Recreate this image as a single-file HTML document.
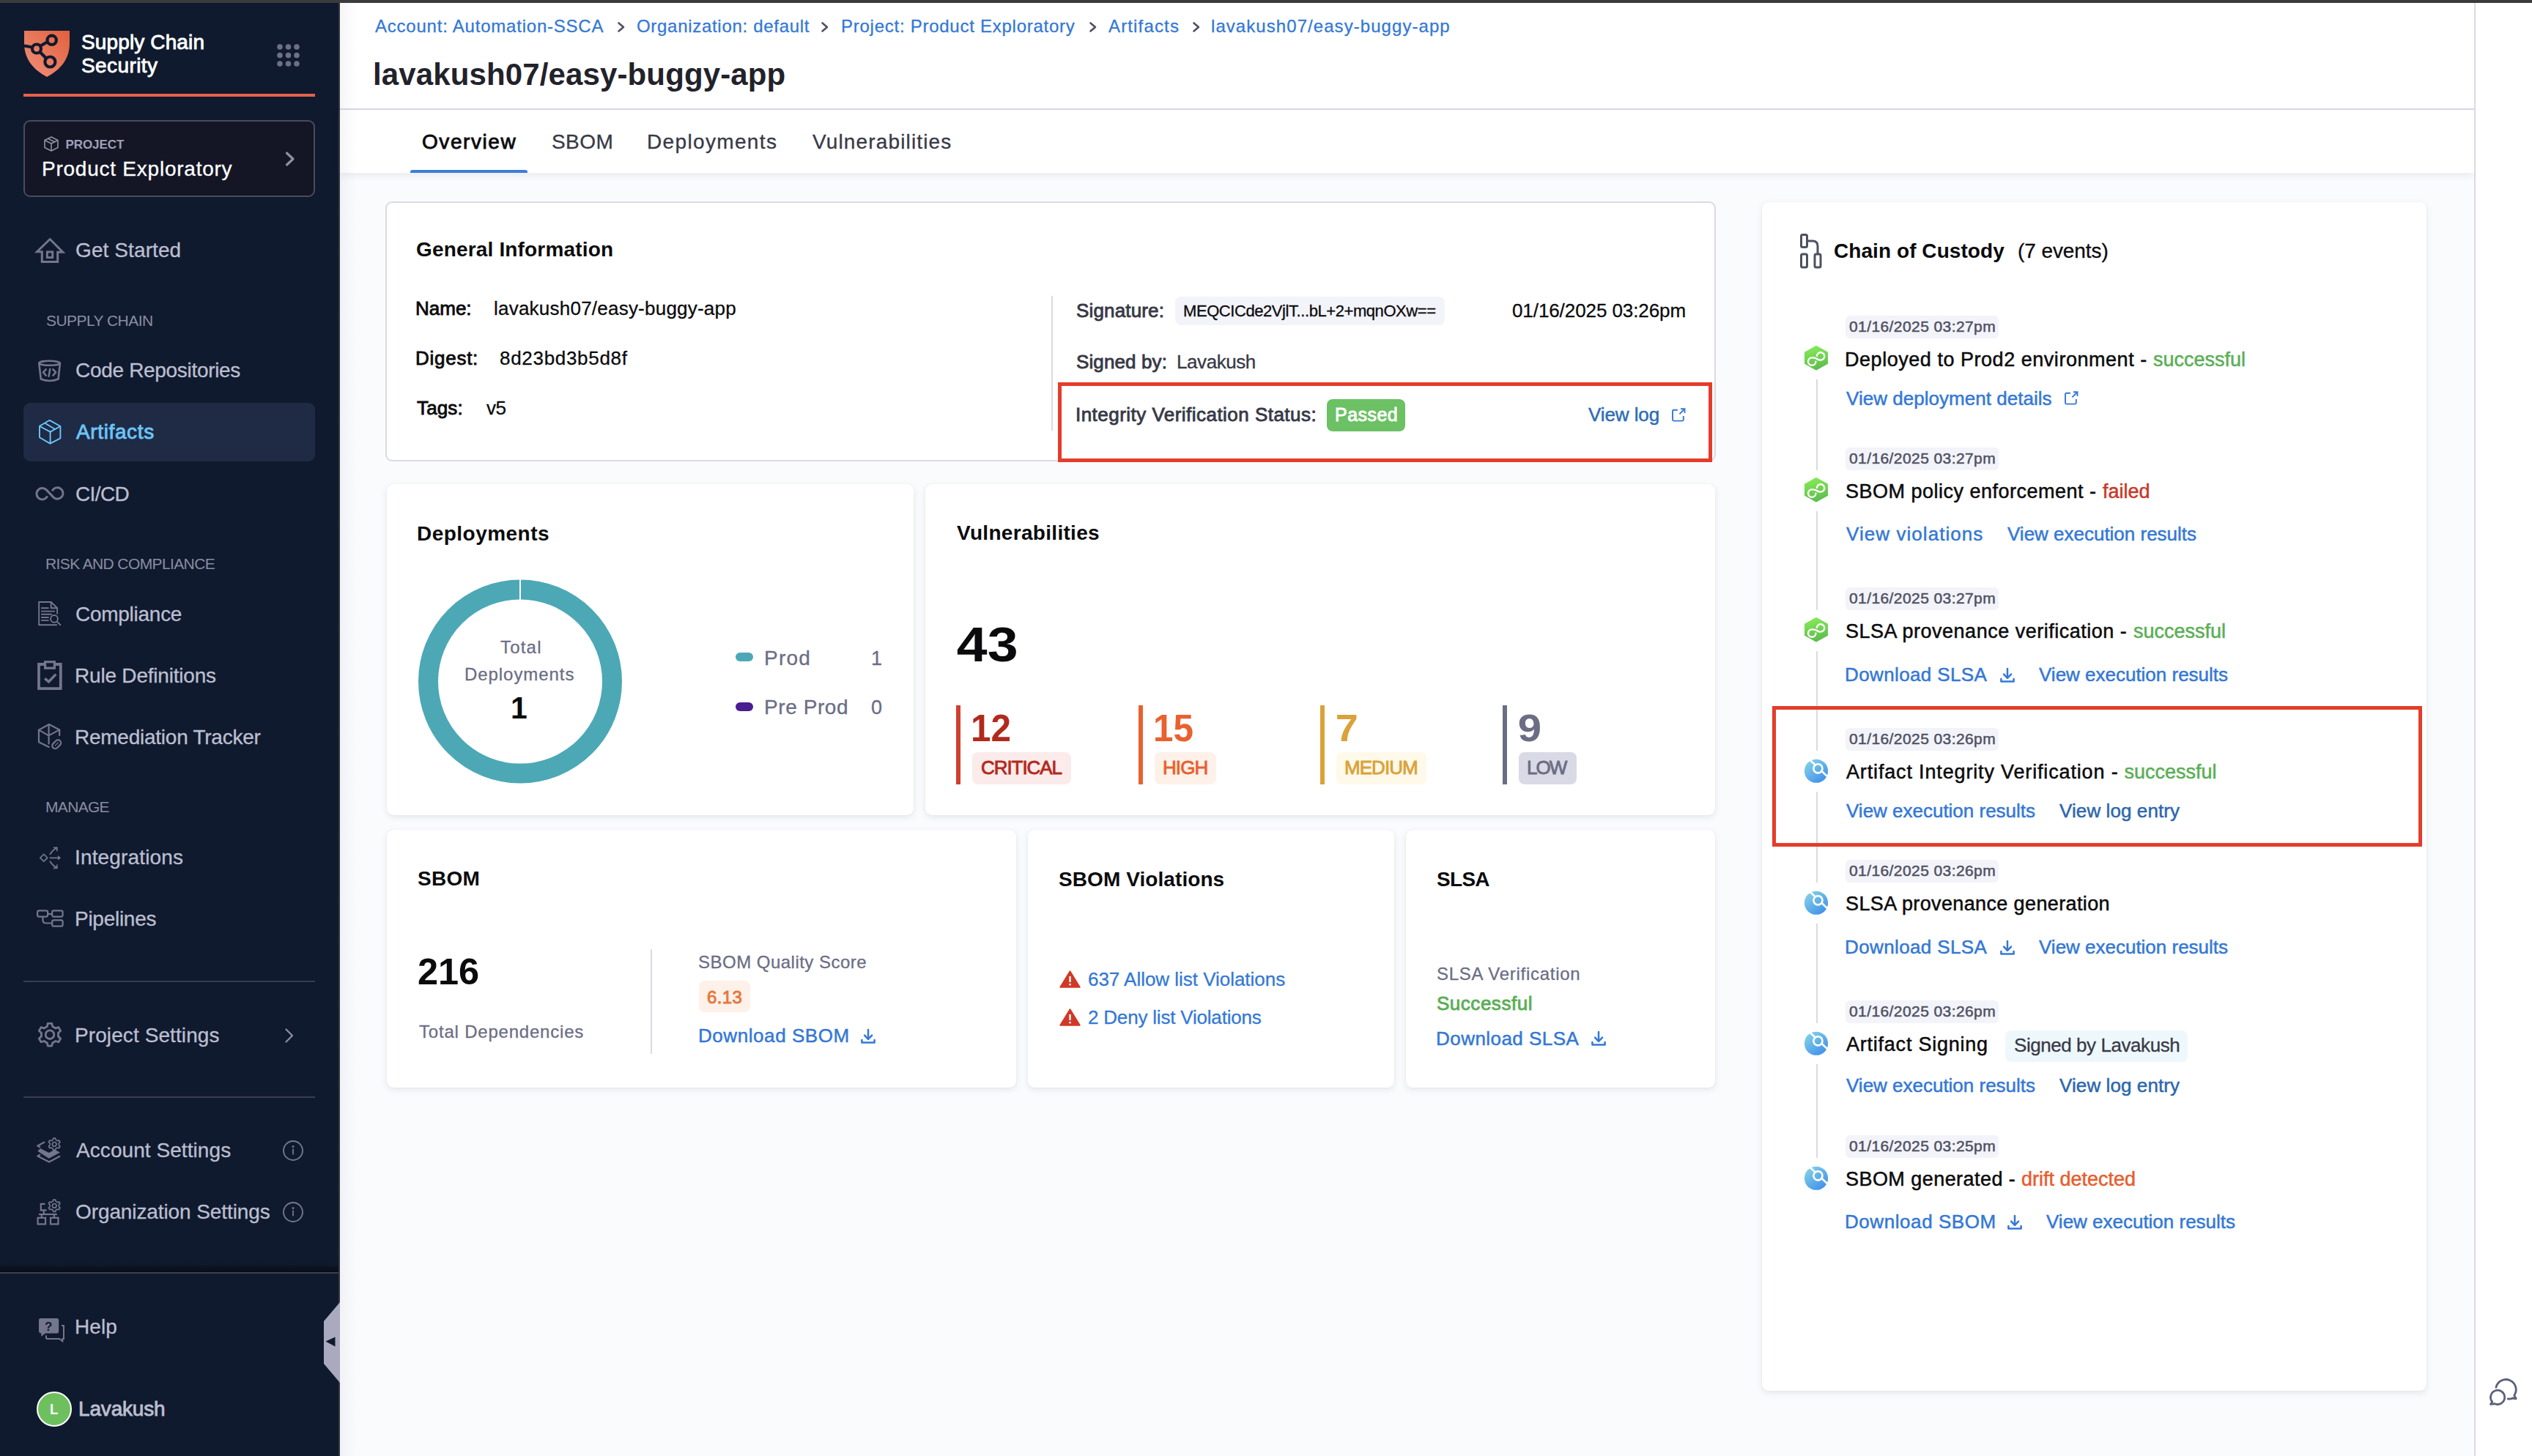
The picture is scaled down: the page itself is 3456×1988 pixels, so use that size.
<!DOCTYPE html><html><head><meta charset='utf-8'><style>
*{margin:0;padding:0;box-sizing:border-box}
html,body{width:3456px;height:1988px;overflow:hidden;background:#F9FBFD;font-family:"Liberation Sans",sans-serif}
.t{position:absolute;white-space:pre;line-height:1}
.a{position:absolute}
svg{position:absolute;overflow:visible}
</style></head><body>
<div class='a' style='left:0;top:0;width:3456px;height:1988px;background:#F9FBFD'></div>
<div class='a' style='left:0;top:0;width:462px;height:1988px;background:#0F1A2E'></div>
<div class='a' style='left:462px;top:0;width:2px;height:1988px;background:#34353F'></div>
<div class='a' style='left:464px;top:0;width:2913px;height:148px;background:#fff'></div>
<div class='a' style='left:464px;top:148px;width:2913px;height:2px;background:#D9DAE5'></div>
<div class='a' style='left:464px;top:150px;width:2913px;height:86px;background:#fff;box-shadow:0 4px 10px rgba(96,97,112,.10)'></div>
<div class='a' style='left:3377px;top:0;width:2px;height:1988px;background:#D9DAE5'></div>
<div class='a' style='left:3379px;top:0;width:77px;height:1988px;background:#fff'></div>
<div class='a' style='left:464px;top:0;width:22px;height:1988px;background:linear-gradient(to right,rgba(40,41,61,.045),rgba(40,41,61,0))'></div>
<div class='a' style='left:0;top:0;width:3456px;height:4px;background:#3B3B3D'></div>
<svg style='left:33px;top:42px' width='62' height='63' viewBox='0 0 62 63'>
<defs><linearGradient id='lg' x1='1' y1='0' x2='0' y2='1'><stop offset='0' stop-color='#E1603E'/><stop offset='1' stop-color='#F0917A'/></linearGradient></defs>
<path d='M0 0 H62 V17 C62 38 50 53 31 63 C12 53 0 38 0 17 Z' fill='url(#lg)'/>
<g fill='none' stroke='#0F1A2E' stroke-width='4.2'>
<path d='M0 20.5 L11 22.5'/><path d='M22.5 20.5 L32 15'/><path d='M21.5 29 L30 37.5'/>
<circle cx='17' cy='24.5' r='6'/><circle cx='37.7' cy='12.8' r='6.2'/><circle cx='35.4' cy='42.5' r='7'/>
</g></svg>
<div class='t' style='left:111.00px;top:44px;font-size:28px;font-weight:400;-webkit-text-stroke:0.85px #FFFFFF;color:#FFFFFF;letter-spacing:0.127px;'>Supply Chain</div>
<div class='t' style='left:111.00px;top:76px;font-size:28px;font-weight:400;-webkit-text-stroke:0.85px #FFFFFF;color:#FFFFFF;letter-spacing:0.400px;'>Security</div>
<svg style='left:378px;top:60px' width='31' height='31'><circle cx='4.0' cy='4.0' r='3.8' fill='#6E7087'/><circle cx='15.5' cy='4.0' r='3.8' fill='#6E7087'/><circle cx='27.0' cy='4.0' r='3.8' fill='#6E7087'/><circle cx='4.0' cy='15.5' r='3.8' fill='#6E7087'/><circle cx='15.5' cy='15.5' r='3.8' fill='#6E7087'/><circle cx='27.0' cy='15.5' r='3.8' fill='#6E7087'/><circle cx='4.0' cy='27.0' r='3.8' fill='#6E7087'/><circle cx='15.5' cy='27.0' r='3.8' fill='#6E7087'/><circle cx='27.0' cy='27.0' r='3.8' fill='#6E7087'/></svg>
<div class='a' style='left:32px;top:128px;width:398px;height:4px;background:#E8604A'></div>
<div class='a' style='left:32px;top:164px;width:398px;height:105px;background:#141625;border:2px solid #4A4C5F;border-radius:9px'></div>
<svg style='left:60px;top:186px' width='20' height='21' viewBox='0 0 20 21'><g fill='none' stroke='#8E90A5' stroke-width='1.6' stroke-linejoin='round'>
<path d='M10 1 L19 5.5 V15.5 L10 20 L1 15.5 V5.5 Z'/><path d='M1 5.5 L10 10 L19 5.5'/><path d='M10 10 V20'/><path d='M5.5 3.2 L14.5 7.7'/></g></svg>
<div class='t' style='left:89.50px;top:189px;font-size:17px;font-weight:700;color:#9FA1B8;letter-spacing:-0.083px;'>PROJECT</div>
<div class='t' style='left:57.00px;top:217px;font-size:28px;font-weight:400;-webkit-text-stroke:0.3px #FFFFFF;color:#FFFFFF;letter-spacing:0.761px;'>Product Exploratory</div>
<svg style='left:389px;top:207px' width='14' height='20' viewBox='0 0 14 20'><path d='M2.5 2 L11 10 L2.5 18' fill='none' stroke='#8E90A5' stroke-width='3.2' stroke-linecap='round' stroke-linejoin='round'/></svg>
<div class='a' style='left:32px;top:550px;width:398px;height:80px;background:#1F2A44;border-radius:9px'></div>
<div class='t' style='left:103.00px;top:328px;font-size:28px;font-weight:400;-webkit-text-stroke:0.3px #BCBED0;color:#BCBED0;letter-spacing:0.100px;'>Get Started</div>
<div class='t' style='left:103.00px;top:492px;font-size:28px;font-weight:400;-webkit-text-stroke:0.3px #BCBED0;color:#BCBED0;letter-spacing:-0.312px;'>Code Repositories</div>
<div class='t' style='left:103.00px;top:661px;font-size:28px;font-weight:400;-webkit-text-stroke:0.3px #BCBED0;color:#BCBED0;letter-spacing:-0.600px;'>CI/CD</div>
<div class='t' style='left:103.00px;top:825px;font-size:28px;font-weight:400;-webkit-text-stroke:0.3px #BCBED0;color:#BCBED0;letter-spacing:-0.267px;'>Compliance</div>
<div class='t' style='left:102.00px;top:909px;font-size:28px;font-weight:400;-webkit-text-stroke:0.3px #BCBED0;color:#BCBED0;letter-spacing:-0.200px;'>Rule Definitions</div>
<div class='t' style='left:102.00px;top:993px;font-size:28px;font-weight:400;-webkit-text-stroke:0.3px #BCBED0;color:#BCBED0;letter-spacing:-0.250px;'>Remediation Tracker</div>
<div class='t' style='left:102.00px;top:1157px;font-size:28px;font-weight:400;-webkit-text-stroke:0.3px #BCBED0;color:#BCBED0;letter-spacing:0.155px;'>Integrations</div>
<div class='t' style='left:102.00px;top:1241px;font-size:28px;font-weight:400;-webkit-text-stroke:0.3px #BCBED0;color:#BCBED0;letter-spacing:-0.275px;'>Pipelines</div>
<div class='t' style='left:102.00px;top:1400px;font-size:28px;font-weight:400;-webkit-text-stroke:0.3px #BCBED0;color:#BCBED0;letter-spacing:0.093px;'>Project Settings</div>
<div class='t' style='left:104.00px;top:1557px;font-size:28px;font-weight:400;-webkit-text-stroke:0.3px #BCBED0;color:#BCBED0;letter-spacing:0.067px;'>Account Settings</div>
<div class='t' style='left:103.00px;top:1641px;font-size:28px;font-weight:400;-webkit-text-stroke:0.3px #BCBED0;color:#BCBED0;letter-spacing:-0.100px;'>Organization Settings</div>
<div class='t' style='left:102.00px;top:1798px;font-size:28px;font-weight:400;-webkit-text-stroke:0.3px #BCBED0;color:#BCBED0;letter-spacing:0.100px;'>Help</div>
<div class='t' style='left:104.00px;top:576px;font-size:28px;font-weight:400;-webkit-text-stroke:0.85px #6CC5F7;color:#6CC5F7;letter-spacing:0.625px;'>Artifacts</div>
<svg style='left:40px;top:315px' width='60' height='60' viewBox='0 0 60 60'><g fill='none' stroke='#74768D' stroke-width='3' stroke-linejoin='miter'>
<path d='M10.5 28.8 L28.2 11.5 L45.8 29.3 H38.7 V42.4 H17.3 V28.8 Z'/><rect x='24.35' y='28.9' width='7.4' height='7.7' stroke-width='2.9'/></g></svg>
<svg style='left:40px;top:480px' width='60' height='60' viewBox='0 0 60 60'><g fill='none' stroke='#74768D' stroke-width='2.6' stroke-linecap='round' stroke-linejoin='round'>
<ellipse cx='27.6' cy='15.8' rx='14.3' ry='3'/><path d='M13.3 16 L15.8 37.5 Q27.6 42.5 39.6 37.5 L41.9 16'/>
<path d='M22.6 24.3 L19 28.4 L22.6 32.5'/><path d='M28.3 24 L26.6 33.6'/><path d='M32.5 24.3 L36.1 28.4 L32.5 32.5'/></g></svg>
<svg style='left:40px;top:560px' width='60' height='60' viewBox='0 0 60 60'><g fill='none' stroke='#6CC5F7' stroke-width='1.9' stroke-linejoin='round'>
<path d='M27.8 13.8 L42.4 22 V38.3 L28.4 45.6 L14 37.3 V21.8 Z'/><path d='M14.2 22 L28.6 29.7 L42.4 22'/><path d='M28.6 29.7 V45.5'/><path d='M21.4 17.8 L35.4 26.2'/></g></svg>
<svg style='left:40px;top:644px' width='60' height='60' viewBox='0 0 60 60'><path d='M24.7 33.4 A7.7 7.7 0 1 1 23.3 24.9 L33.6 35.6 A7.7 7.7 0 1 0 31.3 26.3' fill='none' stroke='#74768D' stroke-width='3' stroke-linecap='butt'/></svg>
<svg style='left:40px;top:808px' width='60' height='60' viewBox='0 0 60 60'><g fill='none' stroke='#74768D' stroke-width='1.9'>
<path d='M37.9 45.3 H13.2 V14 H29.7 L38.1 22.2 V30.5'/><path d='M29.7 14 V22.2 H38.1'/>
<path d='M16.1 22.3 H26.6 M16.1 26.6 H35 M16.1 30.7 H30.7 M16.1 35 H26.6 M16.1 39.1 H26.6'/>
<circle cx='34' cy='36.9' r='4.9'/><path d='M37.6 40.6 L42.9 45.8'/></g></svg>
<svg style='left:40px;top:892px' width='60' height='60' viewBox='0 0 60 60'><g fill='none' stroke='#74768D' stroke-width='3.8' stroke-linejoin='miter'>
<path d='M20 15 H13 V48.2 H42.8 V15 H36'/><rect x='21.6' y='11.7' width='12.8' height='8.5' stroke-width='3.2'/>
<path d='M21.2 34.3 L26.5 38.8 L36.3 28.6' stroke-width='3.5'/></g></svg>
<svg style='left:40px;top:976px' width='60' height='60' viewBox='0 0 60 60'><g fill='none' stroke='#74768D' stroke-width='2.2' stroke-linejoin='round' stroke-linecap='round'>
<path d='M41.2 28 V20.4 L27 13 L13 20.6 V37.3 L26.8 43.9'/><path d='M13 20.6 L26.4 28.4 L41.2 20.4'/><path d='M26.6 13.5 V26.5 M26.6 30 V39.5'/>
<rect x='30.5' y='36.3' width='13.5' height='8' rx='4' transform='rotate(-45 37.2 40.3)'/></g>
<g fill='#74768D'><circle cx='35.6' cy='41.6' r='0.9'/><circle cx='37.2' cy='40' r='0.9'/><circle cx='38.8' cy='38.4' r='0.9'/></g></svg>
<svg style='left:40px;top:1141px' width='60' height='60' viewBox='0 0 60 60'><g fill='none' stroke='#74768D' stroke-width='1.7' stroke-linecap='round' stroke-linejoin='round'>
<rect x='16.3' y='26.8' width='7' height='7' transform='rotate(45 19.8 30.3)'/>
<path d='M28.4 30.3 H41'/><path d='M28.4 25.3 Q31.5 20 37.5 16.5'/><path d='M28.4 35.2 Q31.5 40.5 37.5 44'/>
<path d='M33.5 16.3 H37.8 V20.5'/><path d='M33.5 44.3 H37.8 V40'/></g>
<path d='M39 27 L43.2 30.3 L39 33.6 Z' fill='#74768D'/></svg>
<svg style='left:40px;top:1224px' width='60' height='60' viewBox='0 0 60 60'><g fill='none' stroke='#74768D' stroke-width='2.2'>
<rect x='11.1' y='19.3' width='14' height='8.3' rx='2'/><rect x='31.2' y='19.3' width='14.4' height='8.3' rx='2'/><rect x='31.2' y='32.4' width='14.4' height='8.3' rx='2'/>
<path d='M25.1 23.9 H31.2'/><path d='M18.4 27.6 V32 Q18.4 36.5 22.9 36.5 H31.2'/></g></svg>
<svg style='left:40px;top:1382px' width='60' height='60' viewBox='0 0 60 60'><g fill='none' stroke='#74768D' stroke-width='2.8' stroke-linejoin='round'>
<path d='M24.35 19.48 L25.24 15.35 L30.76 15.35 L31.65 19.48 L35.90 21.93 L39.92 20.63 L42.68 25.42 L39.54 28.25 L39.54 33.15 L42.68 35.98 L39.92 40.77 L35.90 39.47 L31.65 41.92 L30.76 46.05 L25.24 46.05 L24.35 41.92 L20.10 39.47 L16.08 40.77 L13.32 35.98 L16.46 33.15 L16.46 28.25 L13.32 25.42 L16.08 20.63 L20.10 21.93 Z'/><circle cx='28' cy='30.7' r='5.8'/></g></svg>
<svg style='left:40px;top:1540px' width='60' height='60' viewBox='0 0 60 60'><g fill='none' stroke='#74768D' stroke-width='2.2' stroke-linejoin='round'>
<path d='M32.25 16.31 L32.73 14.13 L35.67 14.13 L36.15 16.31 L38.42 17.62 L40.54 16.94 L42.01 19.49 L40.36 20.99 L40.36 23.61 L42.01 25.11 L40.54 27.66 L38.42 26.98 L36.15 28.29 L35.67 30.47 L32.73 30.47 L32.25 28.29 L29.98 26.98 L27.86 27.66 L26.39 25.11 L28.04 23.61 L28.04 20.99 L26.39 19.49 L27.86 16.94 L29.98 17.62 Z' stroke-width='1.7'/><circle cx='34.2' cy='22.3' r='2.8' stroke-width='1.7'/>
<path d='M21 19.3 L11.3 24.5 L15 26.5'/><path d='M42 38.5 L27 46.5 L11.3 38.5 L15 36.5'/></g>
<path d='M11.3 31.8 L26.8 41.8 L42 33.5 L34.5 29.8 L26.8 34 L15 28 Z' fill='#74768D'/></svg>
<svg style='left:40px;top:1624px' width='60' height='60' viewBox='0 0 60 60'><g fill='none' stroke='#74768D' stroke-width='2.2'>
<path d='M32.25 16.31 L32.73 14.13 L35.67 14.13 L36.15 16.31 L38.42 17.62 L40.54 16.94 L42.01 19.49 L40.36 20.99 L40.36 23.61 L42.01 25.11 L40.54 27.66 L38.42 26.98 L36.15 28.29 L35.67 30.47 L32.73 30.47 L32.25 28.29 L29.98 26.98 L27.86 27.66 L26.39 25.11 L28.04 23.61 L28.04 20.99 L26.39 19.49 L27.86 16.94 L29.98 17.62 Z' stroke-width='1.7' stroke-linejoin='round'/><circle cx='34.2' cy='22.3' r='2.8' stroke-width='1.7'/>
<path d='M21.5 19.8 H15.8 V28.4 H23.5'/><path d='M19.8 28.4 V34.2'/><path d='M13 34 H37.8'/><path d='M16.8 34 V38.8 M34 34 V38.8'/>
<rect x='11.6' y='38.8' width='10.5' height='8.6'/><rect x='29' y='38.8' width='10.5' height='8.6'/></g></svg>
<svg style='left:40px;top:1786px' width='60' height='60' viewBox='0 0 60 60'><path d='M15.5 14 H37.8 Q40.2 14 40.2 16.4 V32.3 Q40.2 34.6 37.8 34.6 H22 L16.5 38.7 L16 34.4 Q13 34 13 31.5 V16.5 Q13 14 15.5 14 Z' fill='#74768D'/>
<text x='26.3' y='30.5' font-family='Liberation Sans' font-weight='700' font-size='17' fill='#0F1A2E' text-anchor='middle'>?</text>
<path d='M44 24 H47 V42 H45.3 L45.3 45.3 L41 42 H24.8 Q23 42 23 40.2 V37.3' fill='none' stroke='#74768D' stroke-width='2'/></svg>
<svg style='left:385px;top:1556px' width='30' height='30' viewBox='0 0 30 30'><circle cx='15' cy='15' r='13' fill='none' stroke='#74768D' stroke-width='1.9'/><circle cx='15' cy='9.4' r='1.5' fill='#74768D'/><path d='M15 13.2 V19.7' stroke='#74768D' stroke-width='1.8' stroke-linecap='round'/></svg>
<svg style='left:385px;top:1640px' width='30' height='30' viewBox='0 0 30 30'><circle cx='15' cy='15' r='13' fill='none' stroke='#74768D' stroke-width='1.9'/><circle cx='15' cy='9.4' r='1.5' fill='#74768D'/><path d='M15 13.2 V19.7' stroke='#74768D' stroke-width='1.8' stroke-linecap='round'/></svg>
<svg style='left:388px;top:1404px' width='14' height='20' viewBox='0 0 14 20'><path d='M2.5 1.5 L11 10 L2.5 18.5' fill='none' stroke='#8E90A5' stroke-width='2.2' stroke-linecap='round' stroke-linejoin='round'/></svg>
<div class='t' style='left:63.00px;top:427px;font-size:21px;font-weight:400;color:#8B8DA2;letter-spacing:-0.545px;'>SUPPLY CHAIN</div>
<div class='t' style='left:62.00px;top:759px;font-size:21px;font-weight:400;color:#8B8DA2;letter-spacing:-0.611px;'>RISK AND COMPLIANCE</div>
<div class='t' style='left:62.00px;top:1091px;font-size:21px;font-weight:400;color:#8B8DA2;letter-spacing:-0.680px;'>MANAGE</div>
<div class='a' style='left:32px;top:1339px;width:398px;height:2px;background:#3A3D4E'></div>
<div class='a' style='left:32px;top:1497px;width:398px;height:2px;background:#3A3D4E'></div>
<div class='a' style='left:0;top:1725px;width:462px;height:13px;background:linear-gradient(#0F1A2E,#070B14)'></div>
<div class='a' style='left:0;top:1737px;width:462px;height:2px;background:#3E404E'></div>
<div class='a' style='left:50px;top:1900px;width:48px;height:48px;border-radius:50%;background:#6EC05F;border:2px solid #fff'></div>
<div class='t' style='left:67.60px;top:1914px;font-size:20px;font-weight:700;color:#FFFFFF;transform:scaleX(0.9273);transform-origin:1px 0;'>L</div>
<div class='t' style='left:107.00px;top:1910px;font-size:28px;font-weight:400;-webkit-text-stroke:0.85px #BCBED0;color:#BCBED0;letter-spacing:-0.171px;'>Lavakush</div>
<svg style='left:440px;top:1778px' width='24' height='110' viewBox='0 0 24 110'><path d='M24 0 V110 L2 84 V26 Z' fill='#A9AABF'/><path d='M4.5 53.6 L17.5 47.4 V60.4 Z' fill='#0F1A2E'/></svg>
<div class='t' style='left:512.00px;top:24px;font-size:24px;font-weight:400;-webkit-text-stroke:0.3px #3478D6;color:#3478D6;letter-spacing:0.783px;'>Account: Automation-SSCA</div>
<div class='t' style='left:869.00px;top:24px;font-size:24px;font-weight:400;-webkit-text-stroke:0.3px #3478D6;color:#3478D6;letter-spacing:0.700px;'>Organization: default</div>
<div class='t' style='left:1148.00px;top:24px;font-size:24px;font-weight:400;-webkit-text-stroke:0.3px #3478D6;color:#3478D6;letter-spacing:0.741px;'>Project: Product Exploratory</div>
<div class='t' style='left:1513.00px;top:24px;font-size:24px;font-weight:400;-webkit-text-stroke:0.3px #3478D6;color:#3478D6;letter-spacing:1.150px;'>Artifacts</div>
<div class='t' style='left:1653.00px;top:24px;font-size:24px;font-weight:400;-webkit-text-stroke:0.3px #3478D6;color:#3478D6;letter-spacing:1.062px;'>lavakush07/easy-buggy-app</div>
<svg style='left:841.5px;top:30px' width='12' height='14' viewBox='0 0 12 14'><path d='M2.5 1.5 L9 7 L2.5 12.5' fill='none' stroke='#4F5162' stroke-width='2.6' stroke-linecap='round' stroke-linejoin='round'/></svg>
<svg style='left:1120px;top:30px' width='12' height='14' viewBox='0 0 12 14'><path d='M2.5 1.5 L9 7 L2.5 12.5' fill='none' stroke='#4F5162' stroke-width='2.6' stroke-linecap='round' stroke-linejoin='round'/></svg>
<svg style='left:1486px;top:30px' width='12' height='14' viewBox='0 0 12 14'><path d='M2.5 1.5 L9 7 L2.5 12.5' fill='none' stroke='#4F5162' stroke-width='2.6' stroke-linecap='round' stroke-linejoin='round'/></svg>
<svg style='left:1627px;top:30px' width='12' height='14' viewBox='0 0 12 14'><path d='M2.5 1.5 L9 7 L2.5 12.5' fill='none' stroke='#4F5162' stroke-width='2.6' stroke-linecap='round' stroke-linejoin='round'/></svg>
<div class='t' style='left:509.00px;top:81px;font-size:42px;font-weight:700;color:#22222A;letter-spacing:0.125px;'>lavakush07/easy-buggy-app</div>
<div class='t' style='left:576.00px;top:180px;font-size:28px;font-weight:400;-webkit-text-stroke:0.85px #0B0B0D;color:#0B0B0D;letter-spacing:1.571px;'>Overview</div>
<div class='t' style='left:753.00px;top:180px;font-size:28px;font-weight:400;-webkit-text-stroke:0.3px #383946;color:#383946;letter-spacing:0.433px;'>SBOM</div>
<div class='t' style='left:883.00px;top:180px;font-size:28px;font-weight:400;-webkit-text-stroke:0.3px #383946;color:#383946;letter-spacing:1.350px;'>Deployments</div>
<div class='t' style='left:1109.00px;top:180px;font-size:28px;font-weight:400;-webkit-text-stroke:0.3px #383946;color:#383946;letter-spacing:1.143px;'>Vulnerabilities</div>
<div class='a' style='left:560px;top:232px;width:160px;height:4px;background:#3B7DDB;border-radius:3px 3px 0 0'></div>
<div class='a' style='left:526px;top:275px;width:1816px;height:355px;background:#fff;border-radius:9px;box-shadow:0 0 2px rgba(40,41,61,.06),0 3px 8px rgba(96,97,112,.13);border:2px solid #D9DAE5;box-shadow:none'></div>
<div class='a' style='left:528px;top:661px;width:719px;height:452px;background:#fff;border-radius:9px;box-shadow:0 0 2px rgba(40,41,61,.06),0 3px 8px rgba(96,97,112,.13);'></div>
<div class='a' style='left:1263px;top:661px;width:1078px;height:452px;background:#fff;border-radius:9px;box-shadow:0 0 2px rgba(40,41,61,.06),0 3px 8px rgba(96,97,112,.13);'></div>
<div class='a' style='left:528px;top:1133px;width:859px;height:352px;background:#fff;border-radius:9px;box-shadow:0 0 2px rgba(40,41,61,.06),0 3px 8px rgba(96,97,112,.13);'></div>
<div class='a' style='left:1403px;top:1133px;width:500px;height:352px;background:#fff;border-radius:9px;box-shadow:0 0 2px rgba(40,41,61,.06),0 3px 8px rgba(96,97,112,.13);'></div>
<div class='a' style='left:1919px;top:1133px;width:422px;height:352px;background:#fff;border-radius:9px;box-shadow:0 0 2px rgba(40,41,61,.06),0 3px 8px rgba(96,97,112,.13);'></div>
<div class='a' style='left:2405px;top:276px;width:907px;height:1623px;background:#fff;border-radius:9px;box-shadow:0 0 2px rgba(40,41,61,.06),0 3px 8px rgba(96,97,112,.13);'></div>
<div class='t' style='left:568.00px;top:327px;font-size:28px;font-weight:700;color:#0B0B0D;letter-spacing:0.167px;'>General Information</div>
<div class='t' style='left:567.00px;top:408px;font-size:26px;font-weight:400;-webkit-text-stroke:0.85px #0B0B0D;color:#0B0B0D;letter-spacing:0.000px;'>Name:</div>
<div class='t' style='left:674.00px;top:408px;font-size:26px;font-weight:400;-webkit-text-stroke:0.3px #0B0B0D;color:#0B0B0D;letter-spacing:0.229px;'>lavakush07/easy-buggy-app</div>
<div class='t' style='left:567.00px;top:476px;font-size:26px;font-weight:400;-webkit-text-stroke:0.85px #0B0B0D;color:#0B0B0D;letter-spacing:0.733px;'>Digest:</div>
<div class='t' style='left:682.00px;top:476px;font-size:26px;font-weight:400;-webkit-text-stroke:0.3px #0B0B0D;color:#0B0B0D;letter-spacing:0.700px;'>8d23bd3b5d8f</div>
<div class='t' style='left:569.00px;top:544px;font-size:26px;font-weight:400;-webkit-text-stroke:0.85px #0B0B0D;color:#0B0B0D;letter-spacing:0.125px;'>Tags:</div>
<div class='t' style='left:664.00px;top:544px;font-size:26px;font-weight:400;-webkit-text-stroke:0.3px #0B0B0D;color:#0B0B0D;letter-spacing:-0.400px;'>v5</div>
<div class='a' style='left:1435px;top:404px;width:2px;height:184px;background:#D9DAE5'></div>
<div class='t' style='left:1469.00px;top:411px;font-size:26px;font-weight:400;-webkit-text-stroke:0.85px #383946;color:#383946;letter-spacing:0.156px;'>Signature:</div>
<div class='a' style='left:1604px;top:405px;width:368px;height:39px;background:#F3F3FA;border-radius:8px'></div>
<div class='t' style='left:1615.00px;top:414px;font-size:22px;font-weight:400;-webkit-text-stroke:0.3px #0B0B0D;color:#0B0B0D;letter-spacing:-0.429px;'>MEQCICde2VjlT...bL+2+mqnOXw==</div>
<div class='t' style='left:2064.00px;top:411px;font-size:26px;font-weight:400;-webkit-text-stroke:0.3px #0B0B0D;color:#0B0B0D;letter-spacing:-0.088px;'>01/16/2025 03:26pm</div>
<div class='t' style='left:1469.00px;top:481px;font-size:26px;font-weight:400;-webkit-text-stroke:0.85px #383946;color:#383946;letter-spacing:0.111px;'>Signed by:</div>
<div class='t' style='left:1606.00px;top:481px;font-size:26px;font-weight:400;-webkit-text-stroke:0.3px #383946;color:#383946;letter-spacing:-0.429px;'>Lavakush</div>
<div class='t' style='left:1468.00px;top:553px;font-size:26px;font-weight:400;-webkit-text-stroke:0.85px #383946;color:#383946;letter-spacing:0.469px;'>Integrity Verification Status:</div>
<div class='a' style='left:1811px;top:545px;width:107px;height:44px;background:#6BC163;border-radius:8px'></div>
<div class='t' style='left:1822.00px;top:554px;font-size:25px;font-weight:400;-webkit-text-stroke:0.85px #FFFFFF;color:#FFFFFF;letter-spacing:0.460px;'>Passed</div>
<div class='t' style='left:2168.00px;top:553px;font-size:26px;font-weight:400;-webkit-text-stroke:0.5px #2F6DB5;color:#2F6DB5;letter-spacing:-0.086px;'>View log</div>
<svg style='left:2281.9px;top:557.2px' width='20' height='20' viewBox='0 0 20 20'><g fill='none' stroke='#3478D6' stroke-width='1.9' stroke-linecap='butt'><path d='M7.9 2.8 H2.5 Q1 2.8 1 4.3 V16.1 Q1 17.6 2.5 17.6 H14.3 Q15.8 17.6 15.8 16.1 V11.1'/><path d='M10.4 8.3 L17.2 1.5'/><path d='M12 1.2 H17.5 V6.9'/></g></svg>
<div class='a' style='left:1444px;top:522px;width:893px;height:109px;border:5px solid #E43D2A'></div>
<div class='t' style='left:569.00px;top:715px;font-size:28px;font-weight:700;color:#0B0B0D;letter-spacing:0.470px;'>Deployments</div>
<svg style='left:571px;top:791px' width='278' height='279' viewBox='0 0 278 279'>
<circle cx='139' cy='139.5' r='125.5' fill='none' stroke='#4DA8B6' stroke-width='27'/>
<rect x='138' y='0' width='2' height='28' fill='#fff'/></svg>
<div class='t' style='left:683.00px;top:872px;font-size:24px;font-weight:400;-webkit-text-stroke:0.3px #6B6D85;color:#6B6D85;letter-spacing:1.200px;'>Total</div>
<div class='t' style='left:634.00px;top:909px;font-size:24px;font-weight:400;-webkit-text-stroke:0.3px #6B6D85;color:#6B6D85;letter-spacing:0.940px;'>Deployments</div>
<div class='t' style='left:697.20px;top:946px;font-size:42px;font-weight:700;color:#0B0B0D;transform:scaleX(0.9737);transform-origin:3px 0;'>1</div>
<div class='a' style='left:1004px;top:891px;width:24px;height:12px;background:#4DA8B6;border-radius:6px'></div>
<div class='a' style='left:1004px;top:959px;width:24px;height:12px;background:#4A1D91;border-radius:6px'></div>
<div class='t' style='left:1043.00px;top:885px;font-size:28px;font-weight:400;-webkit-text-stroke:0.3px #6B6D85;color:#6B6D85;letter-spacing:1.200px;'>Prod</div>
<div class='t' style='left:1043.00px;top:952px;font-size:28px;font-weight:400;-webkit-text-stroke:0.3px #6B6D85;color:#6B6D85;letter-spacing:0.571px;'>Pre Prod</div>
<div class='t' style='left:1189.00px;top:886px;font-size:27px;font-weight:400;-webkit-text-stroke:0.3px #6B6D85;color:#6B6D85;'>1</div>
<div class='t' style='left:1189.00px;top:953px;font-size:27px;font-weight:400;-webkit-text-stroke:0.3px #6B6D85;color:#6B6D85;'>0</div>
<div class='t' style='left:1306.00px;top:714px;font-size:28px;font-weight:700;color:#0B0B0D;letter-spacing:0.307px;'>Vulnerabilities</div>
<div class='t' style='left:1306.00px;top:847px;font-size:66px;font-weight:700;color:#0B0B0D;transform:scaleX(1.1400);transform-origin:1px 0;'>43</div>
<div class='a' style='left:1305px;top:963px;width:6px;height:108px;background:#D2402F'></div>
<div class='t' style='left:1325.00px;top:969px;font-size:51px;font-weight:700;color:#B22A1C;transform:scaleX(0.9692);transform-origin:3px 0;'>12</div>
<div class='a' style='left:1327px;top:1027px;width:135px;height:44px;background:#FBEBEB;border-radius:8px'></div>
<div class='t' style='left:1339.00px;top:1035px;font-size:26px;font-weight:400;-webkit-text-stroke:0.85px #B22A1C;color:#B22A1C;letter-spacing:-1.057px;'>CRITICAL</div>
<div class='a' style='left:1554px;top:963px;width:6px;height:108px;background:#E9612F'></div>
<div class='t' style='left:1574.00px;top:969px;font-size:51px;font-weight:700;color:#E9612F;transform:scaleX(0.9692);transform-origin:3px 0;'>15</div>
<div class='a' style='left:1576px;top:1027px;width:84px;height:44px;background:#FDF1E9;border-radius:8px'></div>
<div class='t' style='left:1587.00px;top:1035px;font-size:26px;font-weight:400;-webkit-text-stroke:0.85px #E9612F;color:#E9612F;letter-spacing:-0.933px;'>HIGH</div>
<div class='a' style='left:1802px;top:963px;width:6px;height:108px;background:#DAA23A'></div>
<div class='t' style='left:1823.00px;top:969px;font-size:51px;font-weight:700;color:#DAA23A;transform:scaleX(1.0958);transform-origin:2px 0;'>7</div>
<div class='a' style='left:1824px;top:1027px;width:123px;height:44px;background:#FEF9E9;border-radius:8px'></div>
<div class='t' style='left:1835.00px;top:1035px;font-size:26px;font-weight:400;-webkit-text-stroke:0.85px #DAA23A;color:#DAA23A;letter-spacing:-0.940px;'>MEDIUM</div>
<div class='a' style='left:2051px;top:963px;width:6px;height:108px;background:#6B6D85'></div>
<div class='t' style='left:2072.00px;top:969px;font-size:51px;font-weight:700;color:#6B6D85;transform:scaleX(1.1400);transform-origin:2px 0;'>9</div>
<div class='a' style='left:2073px;top:1027px;width:79px;height:44px;background:#D9DAE5;border-radius:8px'></div>
<div class='t' style='left:2084.00px;top:1035px;font-size:26px;font-weight:400;-webkit-text-stroke:0.85px #6B6D85;color:#6B6D85;letter-spacing:-2.000px;'>LOW</div>
<div class='t' style='left:570.00px;top:1186px;font-size:28px;font-weight:700;color:#0B0B0D;letter-spacing:0.267px;'>SBOM</div>
<div class='t' style='left:570.00px;top:1302px;font-size:50px;font-weight:700;color:#0B0B0D;transform:scaleX(1.0088);transform-origin:2px 0;'>216</div>
<div class='t' style='left:572.00px;top:1397px;font-size:24px;font-weight:400;-webkit-text-stroke:0.3px #6B6D85;color:#6B6D85;letter-spacing:0.794px;'>Total Dependencies</div>
<div class='a' style='left:888px;top:1296px;width:2px;height:143px;background:#D9DAE5'></div>
<div class='t' style='left:953.00px;top:1302px;font-size:24px;font-weight:400;-webkit-text-stroke:0.3px #6B6D85;color:#6B6D85;letter-spacing:0.482px;'>SBOM Quality Score</div>
<div class='a' style='left:954px;top:1339px;width:70px;height:43px;background:#FDF1E9;border-radius:8px'></div>
<div class='t' style='left:965.00px;top:1350px;font-size:24px;font-weight:400;-webkit-text-stroke:0.85px #E8763A;color:#E8763A;letter-spacing:0.367px;'>6.13</div>
<div class='t' style='left:953.00px;top:1401px;font-size:26px;font-weight:400;-webkit-text-stroke:0.5px #3478D6;color:#3478D6;letter-spacing:0.567px;'>Download SBOM</div>
<svg style='left:1175px;top:1405px' width='20' height='20' viewBox='0 0 20 20'><g fill='none' stroke='#3478D6' stroke-width='2.5' stroke-linecap='round' stroke-linejoin='round'><path d='M10 1 V13.6'/><path d='M5.1 8.6 L10 13.9 L15.1 8.6'/><path d='M1.4 14.9 V18.6 H18.6 V14.9'/></g></svg>
<div class='t' style='left:1445.00px;top:1187px;font-size:28px;font-weight:700;color:#0B0B0D;letter-spacing:0.079px;'>SBOM Violations</div>
<svg style='left:1447px;top:1325px' width='27' height='23'><path d='M13.5 1 L27 23 H0 Z' fill='#CF3A27' stroke='#CF3A27' stroke-width='1.5' stroke-linejoin='round'/><rect x='12.3' y='8' width='2.4' height='8' fill='#fff'/><rect x='12.3' y='18' width='2.4' height='2.4' fill='#fff'/></svg>
<svg style='left:1447px;top:1377px' width='27' height='23'><path d='M13.5 1 L27 23 H0 Z' fill='#CF3A27' stroke='#CF3A27' stroke-width='1.5' stroke-linejoin='round'/><rect x='12.3' y='8' width='2.4' height='8' fill='#fff'/><rect x='12.3' y='18' width='2.4' height='2.4' fill='#fff'/></svg>
<div class='t' style='left:1485.00px;top:1324px;font-size:26px;font-weight:400;-webkit-text-stroke:0.3px #3478D6;color:#3478D6;letter-spacing:-0.025px;'>637 Allow list Violations</div>
<div class='t' style='left:1485.00px;top:1376px;font-size:26px;font-weight:400;-webkit-text-stroke:0.3px #3478D6;color:#3478D6;letter-spacing:-0.195px;'>2 Deny list Violations</div>
<div class='t' style='left:1961.00px;top:1187px;font-size:28px;font-weight:700;color:#0B0B0D;letter-spacing:-0.700px;'>SLSA</div>
<div class='t' style='left:1961.00px;top:1318px;font-size:24px;font-weight:400;-webkit-text-stroke:0.3px #6B6D85;color:#6B6D85;letter-spacing:0.719px;'>SLSA Verification</div>
<div class='t' style='left:1961.00px;top:1357px;font-size:26px;font-weight:400;-webkit-text-stroke:0.85px #5BAE55;color:#5BAE55;letter-spacing:0.522px;'>Successful</div>
<div class='t' style='left:1960.00px;top:1405px;font-size:26px;font-weight:400;-webkit-text-stroke:0.5px #3478D6;color:#3478D6;letter-spacing:0.458px;'>Download SLSA</div>
<svg style='left:2172px;top:1408px' width='20' height='20' viewBox='0 0 20 20'><g fill='none' stroke='#3478D6' stroke-width='2.5' stroke-linecap='round' stroke-linejoin='round'><path d='M10 1 V13.6'/><path d='M5.1 8.6 L10 13.9 L15.1 8.6'/><path d='M1.4 14.9 V18.6 H18.6 V14.9'/></g></svg>
<svg style='left:2457px;top:319px' width='30' height='48' viewBox='0 0 30 48'><g fill='none' stroke='#4F5162' stroke-width='3'>
<rect x='1.5' y='1.5' width='8' height='17' rx='2'/><rect x='1.5' y='28' width='8' height='18' rx='2'/><rect x='20' y='28' width='8' height='18' rx='2'/><path d='M9.5 10 H17 Q24 10 24 17 V28'/></g></svg>
<div class='t' style='left:2503.00px;top:329px;font-size:28px;font-weight:700;color:#0B0B0D;letter-spacing:0.067px;'>Chain of Custody</div>
<div class='t' style='left:2754.00px;top:329px;font-size:28px;font-weight:400;-webkit-text-stroke:0.3px #0B0B0D;color:#0B0B0D;letter-spacing:-0.078px;'>(7 events)</div>
<div class='a' style='left:2519px;top:431px;width:209px;height:31px;background:#F3F3FA;border-radius:6px'></div>
<div class='t' style='left:2524.00px;top:435px;font-size:21px;font-weight:400;-webkit-text-stroke:0.5px #4F5162;color:#4F5162;letter-spacing:0.412px;'>01/16/2025 03:27pm</div>
<svg style='left:2462px;top:472px' width='34' height='36' viewBox='0 0 34 36'>
<defs><linearGradient id='gg0' gradientUnits='userSpaceOnUse' x1='0' y1='0' x2='8' y2='36'><stop offset='0' stop-color='#8AEE58'/><stop offset='1' stop-color='#5CBB4E'/></linearGradient></defs>
<path d='M17 0.8 L32.2 9.2 V24.4 L17 32.8 L1.8 24.4 V9.2 Z' fill='url(#gg0)' stroke='url(#gg0)' stroke-width='1.6' stroke-linejoin='round'/>
<path d='M16.4 21.7 A5.2 5.2 0 1 1 10.9 16.4 C14 16.2 16.5 17 18 18 C20 19.5 21.5 19.8 23 19.6 A5.2 5.2 0 1 0 17.9 13.8' fill='none' stroke='#fff' stroke-width='2.4' stroke-linecap='round'/></svg>
<div class='t' style='left:2518.00px;top:478px;font-size:27px;font-weight:400;-webkit-text-stroke:0.5px #0B0B0D;color:#0B0B0D;letter-spacing:0.533px;'>Deployed to Prod2 environment -</div>
<div class='t' style='left:2939.00px;top:478px;font-size:27px;font-weight:400;-webkit-text-stroke:0.5px #5AAE55;color:#5AAE55;'>successful</div>
<div class='t' style='left:2520.00px;top:531px;font-size:26px;font-weight:400;-webkit-text-stroke:0.5px #3478D6;color:#3478D6;letter-spacing:0.027px;'>View deployment details</div>
<svg style='left:2817.8px;top:534px' width='20' height='20' viewBox='0 0 20 20'><g fill='none' stroke='#3478D6' stroke-width='1.9' stroke-linecap='butt'><path d='M7.9 2.8 H2.5 Q1 2.8 1 4.3 V16.1 Q1 17.6 2.5 17.6 H14.3 Q15.8 17.6 15.8 16.1 V11.1'/><path d='M10.4 8.3 L17.2 1.5'/><path d='M12 1.2 H17.5 V6.9'/></g></svg>
<div class='a' style='left:2479px;top:518px;width:2px;height:124px;background:#D9DAE5'></div>
<div class='a' style='left:2519px;top:611px;width:209px;height:31px;background:#F3F3FA;border-radius:6px'></div>
<div class='t' style='left:2524.00px;top:615px;font-size:21px;font-weight:400;-webkit-text-stroke:0.5px #4F5162;color:#4F5162;letter-spacing:0.412px;'>01/16/2025 03:27pm</div>
<svg style='left:2462px;top:652px' width='34' height='36' viewBox='0 0 34 36'>
<defs><linearGradient id='gg1' gradientUnits='userSpaceOnUse' x1='0' y1='0' x2='8' y2='36'><stop offset='0' stop-color='#8AEE58'/><stop offset='1' stop-color='#5CBB4E'/></linearGradient></defs>
<path d='M17 0.8 L32.2 9.2 V24.4 L17 32.8 L1.8 24.4 V9.2 Z' fill='url(#gg1)' stroke='url(#gg1)' stroke-width='1.6' stroke-linejoin='round'/>
<path d='M16.4 21.7 A5.2 5.2 0 1 1 10.9 16.4 C14 16.2 16.5 17 18 18 C20 19.5 21.5 19.8 23 19.6 A5.2 5.2 0 1 0 17.9 13.8' fill='none' stroke='#fff' stroke-width='2.4' stroke-linecap='round'/></svg>
<div class='t' style='left:2519.00px;top:658px;font-size:27px;font-weight:400;-webkit-text-stroke:0.5px #0B0B0D;color:#0B0B0D;letter-spacing:0.492px;'>SBOM policy enforcement -</div>
<div class='t' style='left:2870.00px;top:658px;font-size:27px;font-weight:400;-webkit-text-stroke:0.5px #C9372A;color:#C9372A;'>failed</div>
<div class='t' style='left:2520.00px;top:716px;font-size:26px;font-weight:400;-webkit-text-stroke:0.5px #3478D6;color:#3478D6;letter-spacing:1.057px;'>View violations</div>
<div class='t' style='left:2740.00px;top:716px;font-size:26px;font-weight:400;-webkit-text-stroke:0.5px #3478D6;color:#3478D6;letter-spacing:-0.010px;'>View execution results</div>
<div class='a' style='left:2479px;top:698px;width:2px;height:135px;background:#D9DAE5'></div>
<div class='a' style='left:2519px;top:802px;width:209px;height:31px;background:#F3F3FA;border-radius:6px'></div>
<div class='t' style='left:2524.00px;top:806px;font-size:21px;font-weight:400;-webkit-text-stroke:0.5px #4F5162;color:#4F5162;letter-spacing:0.412px;'>01/16/2025 03:27pm</div>
<svg style='left:2462px;top:843px' width='34' height='36' viewBox='0 0 34 36'>
<defs><linearGradient id='gg2' gradientUnits='userSpaceOnUse' x1='0' y1='0' x2='8' y2='36'><stop offset='0' stop-color='#8AEE58'/><stop offset='1' stop-color='#5CBB4E'/></linearGradient></defs>
<path d='M17 0.8 L32.2 9.2 V24.4 L17 32.8 L1.8 24.4 V9.2 Z' fill='url(#gg2)' stroke='url(#gg2)' stroke-width='1.6' stroke-linejoin='round'/>
<path d='M16.4 21.7 A5.2 5.2 0 1 1 10.9 16.4 C14 16.2 16.5 17 18 18 C20 19.5 21.5 19.8 23 19.6 A5.2 5.2 0 1 0 17.9 13.8' fill='none' stroke='#fff' stroke-width='2.4' stroke-linecap='round'/></svg>
<div class='t' style='left:2519.00px;top:849px;font-size:27px;font-weight:400;-webkit-text-stroke:0.5px #0B0B0D;color:#0B0B0D;letter-spacing:0.500px;'>SLSA provenance verification -</div>
<div class='t' style='left:2912.00px;top:849px;font-size:27px;font-weight:400;-webkit-text-stroke:0.5px #5AAE55;color:#5AAE55;'>successful</div>
<div class='t' style='left:2518.00px;top:908px;font-size:26px;font-weight:400;-webkit-text-stroke:0.5px #3478D6;color:#3478D6;letter-spacing:0.383px;'>Download SLSA</div>
<svg style='left:2730.0px;top:912px' width='20' height='20' viewBox='0 0 20 20'><g fill='none' stroke='#3478D6' stroke-width='2.5' stroke-linecap='round' stroke-linejoin='round'><path d='M10 1 V13.6'/><path d='M5.1 8.6 L10 13.9 L15.1 8.6'/><path d='M1.4 14.9 V18.6 H18.6 V14.9'/></g></svg>
<div class='t' style='left:2783.00px;top:908px;font-size:26px;font-weight:400;-webkit-text-stroke:0.5px #3478D6;color:#3478D6;letter-spacing:-0.010px;'>View execution results</div>
<div class='a' style='left:2479px;top:889px;width:2px;height:136px;background:#D9DAE5'></div>
<div class='a' style='left:2519px;top:994px;width:209px;height:31px;background:#F3F3FA;border-radius:6px'></div>
<div class='t' style='left:2524.00px;top:998px;font-size:21px;font-weight:400;-webkit-text-stroke:0.5px #4F5162;color:#4F5162;letter-spacing:0.412px;'>01/16/2025 03:26pm</div>
<svg style='left:2462px;top:1036px' width='34' height='34' viewBox='0 0 34 34'>
<defs><linearGradient id='bg3' gradientUnits='userSpaceOnUse' x1='4' y1='2' x2='28' y2='32'><stop offset='0' stop-color='#86D4E6'/><stop offset='1' stop-color='#3F8EEA'/></linearGradient></defs>
<circle cx='17' cy='16.75' r='16.1' fill='url(#bg3)'/>
<path d='M8.5 1.8 L32 24' stroke='#fff' stroke-width='2.6'/>
<circle cx='19.4' cy='13.3' r='4.8' fill='url(#bg3)'/><circle cx='19.4' cy='13.3' r='6.1' fill='none' stroke='#fff' stroke-width='2.6'/></svg>
<div class='t' style='left:2520.00px;top:1041px;font-size:27px;font-weight:400;-webkit-text-stroke:0.5px #0B0B0D;color:#0B0B0D;letter-spacing:0.844px;'>Artifact Integrity Verification -</div>
<div class='t' style='left:2899.40px;top:1041px;font-size:27px;font-weight:400;-webkit-text-stroke:0.5px #5AAE55;color:#5AAE55;'>successful</div>
<div class='t' style='left:2520.00px;top:1094px;font-size:26px;font-weight:400;-webkit-text-stroke:0.5px #3478D6;color:#3478D6;letter-spacing:-0.010px;'>View execution results</div>
<div class='t' style='left:2811.00px;top:1094px;font-size:26px;font-weight:400;-webkit-text-stroke:0.5px #2C67AD;color:#2C67AD;letter-spacing:0.092px;'>View log entry</div>
<div class='a' style='left:2479px;top:1081px;width:2px;height:124px;background:#D9DAE5'></div>
<div class='a' style='left:2519px;top:1174px;width:209px;height:31px;background:#F3F3FA;border-radius:6px'></div>
<div class='t' style='left:2524.00px;top:1178px;font-size:21px;font-weight:400;-webkit-text-stroke:0.5px #4F5162;color:#4F5162;letter-spacing:0.412px;'>01/16/2025 03:26pm</div>
<svg style='left:2462px;top:1216px' width='34' height='34' viewBox='0 0 34 34'>
<defs><linearGradient id='bg4' gradientUnits='userSpaceOnUse' x1='4' y1='2' x2='28' y2='32'><stop offset='0' stop-color='#86D4E6'/><stop offset='1' stop-color='#3F8EEA'/></linearGradient></defs>
<circle cx='17' cy='16.75' r='16.1' fill='url(#bg4)'/>
<path d='M8.5 1.8 L32 24' stroke='#fff' stroke-width='2.6'/>
<circle cx='19.4' cy='13.3' r='4.8' fill='url(#bg4)'/><circle cx='19.4' cy='13.3' r='6.1' fill='none' stroke='#fff' stroke-width='2.6'/></svg>
<div class='t' style='left:2519.00px;top:1221px;font-size:27px;font-weight:400;-webkit-text-stroke:0.5px #0B0B0D;color:#0B0B0D;letter-spacing:0.372px;'>SLSA provenance generation</div>
<div class='t' style='left:2518.00px;top:1280px;font-size:26px;font-weight:400;-webkit-text-stroke:0.5px #3478D6;color:#3478D6;letter-spacing:0.383px;'>Download SLSA</div>
<svg style='left:2730.0px;top:1284px' width='20' height='20' viewBox='0 0 20 20'><g fill='none' stroke='#3478D6' stroke-width='2.5' stroke-linecap='round' stroke-linejoin='round'><path d='M10 1 V13.6'/><path d='M5.1 8.6 L10 13.9 L15.1 8.6'/><path d='M1.4 14.9 V18.6 H18.6 V14.9'/></g></svg>
<div class='t' style='left:2783.00px;top:1280px;font-size:26px;font-weight:400;-webkit-text-stroke:0.5px #3478D6;color:#3478D6;letter-spacing:-0.010px;'>View execution results</div>
<div class='a' style='left:2479px;top:1261px;width:2px;height:136px;background:#D9DAE5'></div>
<div class='a' style='left:2519px;top:1366px;width:209px;height:31px;background:#F3F3FA;border-radius:6px'></div>
<div class='t' style='left:2524.00px;top:1370px;font-size:21px;font-weight:400;-webkit-text-stroke:0.5px #4F5162;color:#4F5162;letter-spacing:0.412px;'>01/16/2025 03:26pm</div>
<svg style='left:2462px;top:1408px' width='34' height='34' viewBox='0 0 34 34'>
<defs><linearGradient id='bg5' gradientUnits='userSpaceOnUse' x1='4' y1='2' x2='28' y2='32'><stop offset='0' stop-color='#86D4E6'/><stop offset='1' stop-color='#3F8EEA'/></linearGradient></defs>
<circle cx='17' cy='16.75' r='16.1' fill='url(#bg5)'/>
<path d='M8.5 1.8 L32 24' stroke='#fff' stroke-width='2.6'/>
<circle cx='19.4' cy='13.3' r='4.8' fill='url(#bg5)'/><circle cx='19.4' cy='13.3' r='6.1' fill='none' stroke='#fff' stroke-width='2.6'/></svg>
<div class='t' style='left:2520.00px;top:1413px;font-size:27px;font-weight:400;-webkit-text-stroke:0.5px #0B0B0D;color:#0B0B0D;letter-spacing:0.767px;'>Artifact Signing</div>
<div class='t' style='left:2520.00px;top:1469px;font-size:26px;font-weight:400;-webkit-text-stroke:0.5px #3478D6;color:#3478D6;letter-spacing:-0.010px;'>View execution results</div>
<div class='t' style='left:2811.00px;top:1469px;font-size:26px;font-weight:400;-webkit-text-stroke:0.5px #2C67AD;color:#2C67AD;letter-spacing:0.092px;'>View log entry</div>
<div class='a' style='left:2479px;top:1453px;width:2px;height:128px;background:#D9DAE5'></div>
<div class='a' style='left:2519px;top:1550px;width:209px;height:31px;background:#F3F3FA;border-radius:6px'></div>
<div class='t' style='left:2524.00px;top:1554px;font-size:21px;font-weight:400;-webkit-text-stroke:0.5px #4F5162;color:#4F5162;letter-spacing:0.412px;'>01/16/2025 03:25pm</div>
<svg style='left:2462px;top:1592px' width='34' height='34' viewBox='0 0 34 34'>
<defs><linearGradient id='bg6' gradientUnits='userSpaceOnUse' x1='4' y1='2' x2='28' y2='32'><stop offset='0' stop-color='#86D4E6'/><stop offset='1' stop-color='#3F8EEA'/></linearGradient></defs>
<circle cx='17' cy='16.75' r='16.1' fill='url(#bg6)'/>
<path d='M8.5 1.8 L32 24' stroke='#fff' stroke-width='2.6'/>
<circle cx='19.4' cy='13.3' r='4.8' fill='url(#bg6)'/><circle cx='19.4' cy='13.3' r='6.1' fill='none' stroke='#fff' stroke-width='2.6'/></svg>
<div class='t' style='left:2519.00px;top:1597px;font-size:27px;font-weight:400;-webkit-text-stroke:0.5px #0B0B0D;color:#0B0B0D;letter-spacing:0.447px;'>SBOM generated -</div>
<div class='t' style='left:2759.00px;top:1597px;font-size:27px;font-weight:400;-webkit-text-stroke:0.5px #E85D2D;color:#E85D2D;'>drift detected</div>
<div class='t' style='left:2518.00px;top:1655px;font-size:26px;font-weight:400;-webkit-text-stroke:0.5px #3478D6;color:#3478D6;letter-spacing:0.567px;'>Download SBOM</div>
<svg style='left:2740.2000000000003px;top:1659px' width='20' height='20' viewBox='0 0 20 20'><g fill='none' stroke='#3478D6' stroke-width='2.5' stroke-linecap='round' stroke-linejoin='round'><path d='M10 1 V13.6'/><path d='M5.1 8.6 L10 13.9 L15.1 8.6'/><path d='M1.4 14.9 V18.6 H18.6 V14.9'/></g></svg>
<div class='t' style='left:2793.00px;top:1655px;font-size:26px;font-weight:400;-webkit-text-stroke:0.5px #3478D6;color:#3478D6;letter-spacing:-0.010px;'>View execution results</div>
<div class='a' style='left:2737px;top:1407px;width:249px;height:43px;background:#EEF8FC;border-radius:8px'></div>
<div class='t' style='left:2749.00px;top:1414px;font-size:26px;font-weight:400;-webkit-text-stroke:0.3px #383946;color:#383946;letter-spacing:-0.441px;'>Signed by Lavakush</div>
<div class='a' style='left:2419px;top:964px;width:887px;height:192px;border:5px solid #E43D2A'></div>
<svg style='left:3398px;top:1880px' width='40' height='40' viewBox='0 0 40 40'><g fill='none' stroke='#5D6079' stroke-width='2.8' stroke-linejoin='round' stroke-linecap='round'>
<path d='M8.95 14.3 A13.8 13.8 0 1 1 33.7 25.3 L36.2 29.8 L31.5 29 Q28.5 30.8 25.2 29.9'/>
<path d='M3.75 33.97 A9.6 9.6 0 1 1 7.5 36.7 L1.5 37.4 Z'/></g></svg>
</body></html>
